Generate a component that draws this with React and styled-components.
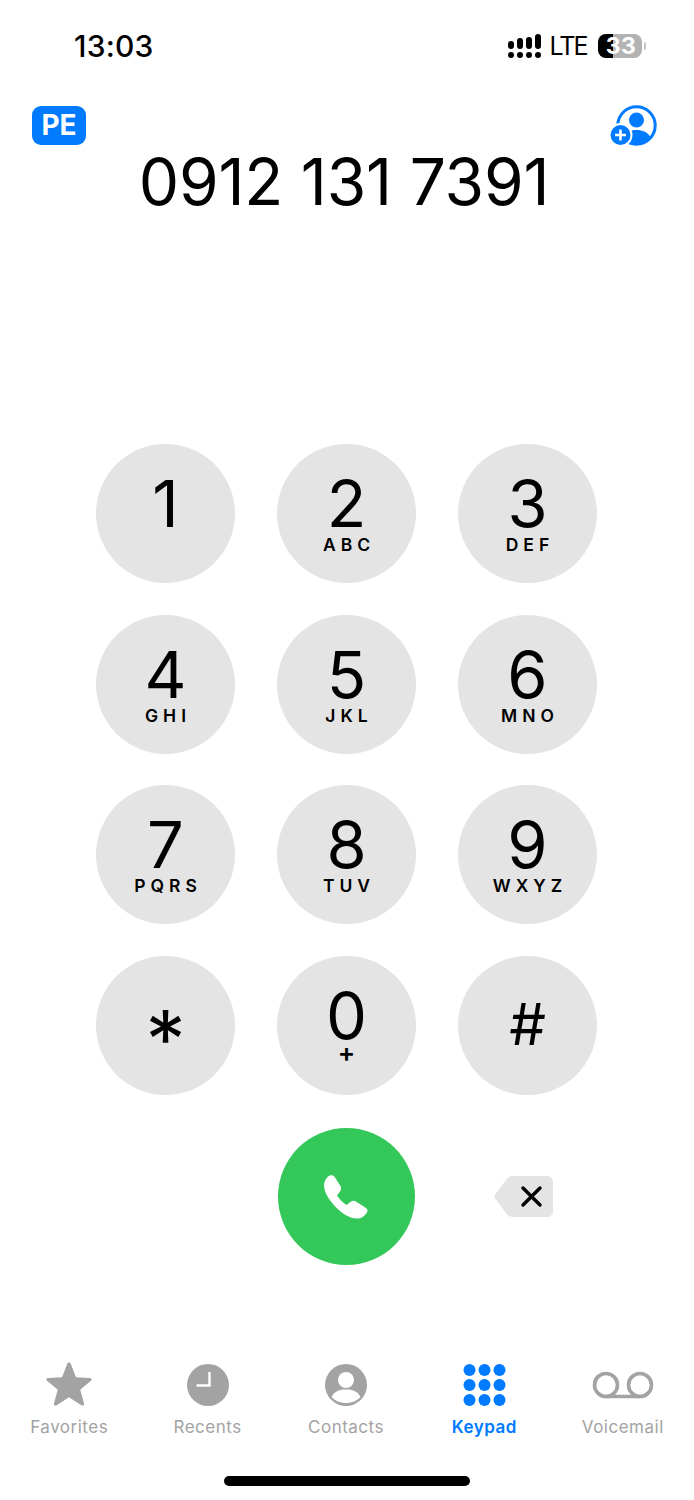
import React from 'react';
import styled, { createGlobalStyle } from 'styled-components';

const Global = createGlobalStyle`
  html, body { margin: 0; padding: 0; background: #fff; }
  body { font-family: Inter, "Liberation Sans", sans-serif; color: #000; }
`;

const KEYS = [
  ['1', ''], ['2', 'ABC'], ['3', 'DEF'],
  ['4', 'GHI'], ['5', 'JKL'], ['6', 'MNO'],
  ['7', 'PQRS'], ['8', 'TUV'], ['9', 'WXYZ'],
];

const TABS = [
  { label: 'Favorites', icon: <StarIcon /> },
  { label: 'Recents', icon: <ClockIcon /> },
  { label: 'Contacts', icon: <ContactIcon /> },
  { label: 'Keypad', icon: <GridIcon />, active: true },
  { label: 'Voicemail', icon: <VoicemailIcon /> },
];

function StarIcon() {
  return (
    <StarSvg width="46" height="45" viewBox="0 0 46 46">
      <path d="M23 1.500c.9 0 1.500.6 1.900 1.500l5.200 13.700 14.200.6c2 .1 2.400 2 1.100 3L34.500 29.400l3.900 14c.4 1.700-1.300 2.800-2.800 1.800L23 37.100l-12.600 8.100c-1.500 1-3.200-.1-2.800-1.800l3.900-14L.6 20.300c-1.300-1-.9-2.900 1.100-3l14.200-.6L21.100 3c.4-.9 1-1.500 1.900-1.500z" fill="#a3a3a3" />
    </StarSvg>
  );
}

function ClockIcon() {
  return (
    <svg width="42" height="42" viewBox="0 0 42 42">
      <circle cx="21" cy="21" r="21" fill="#a3a3a3" />
      <path d="M22.500 8v13.500H9.500" fill="none" stroke="#fff" strokeWidth="2.400" />
    </svg>
  );
}

function ContactIcon() {
  return (
    <svg width="42" height="42" viewBox="0 0 42 42">
      <circle cx="21" cy="21" r="21" fill="#a3a3a3" />
      <circle cx="21" cy="16" r="8" fill="#fff" />
      <path d="M6.500 33c3-6 8.500-7.500 14.500-7.500S32.500 27 35.500 33C32 36.800 27 39 21 39S10 36.800 6.500 33z" fill="#fff" />
    </svg>
  );
}

function GridIcon() {
  const cells = [6, 21, 36];
  return (
    <svg width="43" height="42" viewBox="0 0 43 42">
      {cells.map((y) => [6.500, 21.500, 36.500].map((x) => (
        <circle key={`${x}-${y}`} cx={x} cy={y} r="6" fill="#007aff" />
      )))}
    </svg>
  );
}

function VoicemailIcon() {
  return (
    <svg width="62" height="28" viewBox="0 0 62 28">
      <circle cx="14" cy="14" r="11.500" fill="none" stroke="#a3a3a3" strokeWidth="3.600" />
      <circle cx="48" cy="14" r="11.500" fill="none" stroke="#a3a3a3" strokeWidth="3.600" />
      <path d="M14 25.500h34" fill="none" stroke="#a3a3a3" strokeWidth="3.600" />
    </svg>
  );
}

function PhoneIcon() {
  return (
    <svg width="45" height="46" viewBox="0 0 45 46">
      <path d="M3.500 3C5.500 1 8 .5 10 2l6.500 10c1 2 .5 4-.5 5.500L13 21.500c2.500 3.500 5 6.500 9.500 9.500l4.500-3.500c1.500-1 3.500-1 5 0l10 6.500c2 1.500 2 3 .5 5-2.500 3.500-5 5.500-9.500 5.500-9 0-18-7.500-24-14.500C3.500 23.500 0 17 0 11.500 0 8 1.500 5 3.500 3z" fill="#fff" />
    </svg>
  );
}

function SignalIcon() {
  const bars = [8, 11, 12, 15];
  return (
    <SignalBars>
      {bars.map((h, i) => (
        <SignalColumn key={i}>
          <SignalPill $h={h} />
          <SignalDot />
        </SignalColumn>
      ))}
    </SignalBars>
  );
}

function AddContactIcon() {
  return (
    <svg width="47" height="41" viewBox="0 0 47 41">
      <circle cx="26.500" cy="20.500" r="18.700" fill="none" stroke="#007aff" strokeWidth="3" />
      <circle cx="26.500" cy="15" r="7.500" fill="#007aff" />
      <path d="M12 33c3-6 8.500-8 14.500-8S38 27 41 33c-3.500 4.500-8.500 7-14.500 7S15.500 37.500 12 33z" fill="#007aff" />
      <circle cx="10.500" cy="30" r="12" fill="#fff" />
      <circle cx="10.500" cy="30" r="10" fill="#007aff" />
      <path d="M10.500 24.500v11M5 30h11" stroke="#fff" strokeWidth="2.600" />
    </svg>
  );
}

function BackspaceIcon() {
  return (
    <svg width="60" height="43" viewBox="0 0 60 43">
      <path d="M19 1h34c3.500 0 6 2.500 6 6v29c0 3.500-2.500 6-6 6H19c-2.500 0-4-.8-6-2.500L2 24.500c-2-1.800-2-4.200 0-6L13 3.500C15 1.800 16.500 1 19 1z" fill="#e4e4e4" />
      <path d="M29 13l17 17M46 13L29 30" stroke="#000" strokeWidth="3.400" strokeLinecap="round" />
    </svg>
  );
}

export default function App() {
  return (
    <Screen>
      <Global />
      <StatusBar>
        <Clock>13:03</Clock>
        <StatusRight>
          <SignalIcon />
          <Network>LTE</Network>
          <Battery>33</Battery>
          <BatteryTip />
        </StatusRight>
      </StatusBar>

      <TopActions>
        <CountryBadge>PE</CountryBadge>
        <AddContactIcon />
      </TopActions>
      <PhoneNumber>0912 131 7391</PhoneNumber>

      <Keypad>
        {KEYS.map(([digit, letters]) => (
          <Key key={digit}>
            <Digit>{digit}</Digit>
            {letters && <Letters>{letters}</Letters>}
          </Key>
        ))}
        <Key><Symbol $size={80} $top={43}>*</Symbol></Key>
        <Key>
          <Digit>0</Digit>
          <Plus>+</Plus>
        </Key>
        <Key><Symbol $size={58} $top={39}>#</Symbol></Key>
      </Keypad>

      <CallRow>
        <span />
        <CallButton><PhoneIcon /></CallButton>
        <DeleteCell><BackspaceIcon /></DeleteCell>
      </CallRow>

      <TabBar>
        {TABS.map((tab) => (
          <Tab key={tab.label} $active={tab.active}>
            <TabIcon>{tab.icon}</TabIcon>
            <TabLabel>{tab.label}</TabLabel>
          </Tab>
        ))}
      </TabBar>
      <HomeIndicator />
    </Screen>
  );
}

const StarSvg = styled.svg`
  margin-bottom: 4px;
`;

const Screen = styled.div`
  width: 694px;
  height: 1500px;
  overflow: hidden;
  display: flex;
  flex-direction: column;
  background: #fff;
`;

const StatusBar = styled.div`
  height: 34px;
  padding: 29px 48px 0 74px;
  display: flex;
  justify-content: space-between;
  align-items: center;
`;

const Clock = styled.div`
  font-size: 30px;
  font-weight: 500;
  letter-spacing: 0.2px;
  line-height: 34px;
`;

const StatusRight = styled.div`
  display: flex;
  align-items: center;
`;

const SignalBars = styled.div`
  display: flex;
  align-items: flex-end;
  gap: 3px;
  height: 24px;
  padding-right: 9px;
`;

const SignalColumn = styled.div`
  display: flex;
  flex-direction: column;
  gap: 3px;
  width: 6px;
`;

const SignalPill = styled.div`
  height: ${(p) => p.$h}px;
  border-radius: 3px;
  background: #000;
`;

const SignalDot = styled.div`
  height: 6px;
  border-radius: 3px;
  background: #000;
`;

const Network = styled.div`
  font-size: 25px;
  font-weight: 400;
  letter-spacing: -2px;
  line-height: 24px;
  padding-right: 11px;
`;

const Battery = styled.div`
  width: 44px;
  height: 24px;
  padding-left: 3px;
  box-sizing: border-box;
  border-radius: 8px;
  background: linear-gradient(90deg, #000 0 15px, #b3b3b3 15px);
  color: #fff;
  font-size: 23px;
  font-weight: 700;
  letter-spacing: 0.5px;
  line-height: 24px;
  text-align: center;
`;

const BatteryTip = styled.div`
  width: 2.500px;
  height: 8px;
  margin-left: 2px;
  border-radius: 0 2px 2px 0;
  background: #c4c4c4;
`;

const TopActions = styled.div`
  height: 41px;
  margin-top: 42px;
  padding: 0 37px 0 32px;
  display: flex;
  justify-content: space-between;
  align-items: center;
`;

const CountryBadge = styled.div`
  width: 54px;
  height: 39px;
  border-radius: 9px;
  background: #007aff;
  color: #fff;
  font-size: 28px;
  font-weight: 700;
  line-height: 39px;
  text-align: center;
`;

const PhoneNumber = styled.div`
  margin-top: 4px;
  padding-right: 6px;
  height: 64px;
  font-size: 64px;
  font-weight: 400;
  letter-spacing: -0.2px;
  line-height: 64px;
  text-align: center;
`;

const Keypad = styled.div`
  margin-top: 230px;
  padding-left: 96px;
  display: grid;
  grid-template-columns: repeat(3, 139px);
  grid-auto-rows: 139px;
  column-gap: 42px;
  row-gap: 31.700px;
`;

const Key = styled.div`
  border-radius: 50%;
  background: #e4e4e4;
  display: flex;
  flex-direction: column;
  align-items: center;
  overflow: hidden;
`;

const Digit = styled.div`
  margin-top: 27px;
  font-size: 65px;
  font-weight: 400;
  line-height: 65px;
`;

const Letters = styled.div`
  font-size: 17.500px;
  font-weight: 600;
  letter-spacing: 5px;
  margin-right: -5px;
  line-height: 18px;
`;

const Plus = styled.div`
  font-size: 26px;
  font-weight: 600;
  line-height: 22px;
  margin-top: -6px;
`;

const Symbol = styled.div`
  margin-top: ${(p) => p.$top}px;
  font-size: ${(p) => p.$size}px;
  font-weight: 400;
  line-height: 1;
`;

const CallRow = styled.div`
  margin-top: 33px;
  padding-left: 96px;
  display: grid;
  grid-template-columns: repeat(3, 139px);
  column-gap: 42px;
`;

const CallButton = styled.div`
  width: 137px;
  height: 137px;
  justify-self: end;
  margin-right: 1px;
  border-radius: 50%;
  background: #34c759;
  display: flex;
  align-items: center;
  justify-content: center;
`;

const DeleteCell = styled.div`
  padding-left: 36px;
  display: flex;
  align-items: center;
`;

const TabBar = styled.div`
  margin-top: 97px;
  padding-right: 2px;
  display: grid;
  grid-template-columns: repeat(5, 1fr);
`;

const Tab = styled.div`
  display: flex;
  flex-direction: column;
  align-items: center;
  color: ${(p) => (p.$active ? '#007aff' : '#a3a3a3')};
  font-weight: ${(p) => (p.$active ? 600 : 400)};
`;

const TabIcon = styled.div`
  height: 46px;
  display: flex;
  align-items: center;
  justify-content: center;
`;

const TabLabel = styled.div`
  margin-top: 8px;
  font-size: 17px;
  line-height: 22px;
  letter-spacing: 0.500px;
`;

const HomeIndicator = styled.div`
  width: 246px;
  height: 10px;
  margin: 38px auto 0;
  border-radius: 5px;
  background: #000;
`;
